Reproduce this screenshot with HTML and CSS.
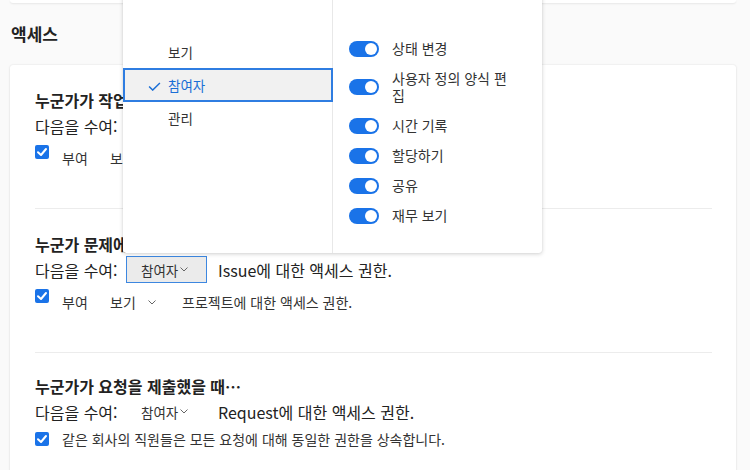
FILE: index.html
```html
<!DOCTYPE html>
<html lang="ko">
<head>
<meta charset="utf-8">
<link rel="stylesheet" href="styles.css">
</head>
<body>
<div class="page">
  <div class="topcard"></div>
  <h2 class="heading">액세스</h2>
  <div class="card">
    <section class="sec sec1">
      <div class="title">누군가가 작업을 만들었을 때…</div>
      <div class="grant">
        <span class="lbl">다음을 수여:</span>
        <span class="dd">참여자<svg class="chev" viewBox="0 0 8 5"><polyline points="0.5,0.5 4,4 7.5,0.5"/></svg></span>
        <span>Task에 대한 액세스 권한.</span>
      </div>
      <div class="check">
        <span class="cb up"><svg viewBox="0 0 14 14"><polyline points="3,7.2 6,10 11,4"/></svg></span>
        <span class="give">부여</span>
        <span class="dd2">보기<svg class="chev" viewBox="0 0 8 5"><polyline points="0.5,0.5 4,4 7.5,0.5"/></svg></span>
        <span>프로젝트에 대한 액세스 권한.</span>
      </div>
    </section>
    <div class="sep"></div>
    <section class="sec sec2">
      <div class="title">누군가 문제에 댓글을 달았을 때…</div>
      <div class="grant">
        <span class="lbl">다음을 수여:</span>
        <span class="dd active">참여자<svg class="chev" viewBox="0 0 8 5"><polyline points="0.5,0.5 4,4 7.5,0.5"/></svg></span>
        <span>Issue에 대한 액세스 권한.</span>
      </div>
      <div class="check">
        <span class="cb up"><svg viewBox="0 0 14 14"><polyline points="3,7.2 6,10 11,4"/></svg></span>
        <span class="give">부여</span>
        <span class="dd2">보기<svg class="chev" viewBox="0 0 8 5"><polyline points="0.5,0.5 4,4 7.5,0.5"/></svg></span>
        <span>프로젝트에 대한 액세스 권한.</span>
      </div>
    </section>
    <div class="sep"></div>
    <section class="sec sec3">
      <div class="title">누군가가 요청을 제출했을 때…</div>
      <div class="grant">
        <span class="lbl">다음을 수여:</span>
        <span class="dd">참여자<svg class="chev" viewBox="0 0 8 5"><polyline points="0.5,0.5 4,4 7.5,0.5"/></svg></span>
        <span>Request에 대한 액세스 권한.</span>
      </div>
      <div class="check last">
        <span class="cb"><svg viewBox="0 0 14 14"><polyline points="3,7.2 6,10 11,4"/></svg></span>
        <span>같은 회사의 직원들은 모든 요청에 대해 동일한 권한을 상속합니다.</span>
      </div>
    </section>
  </div>

  <div class="menu">
    <div class="roles">
      <div class="role">보기</div>
      <div class="role selected"><svg class="tick" viewBox="0 0 14 10"><polyline points="1,5 5,9 13,1"/></svg>참여자</div>
      <div class="role">관리</div>
    </div>
    <div class="perms">
      <div class="perm"><span class="toggle"></span><span class="plabel">상태 변경</span></div>
      <div class="perm"><span class="toggle"></span><span class="plabel">사용자 정의 양식 편집</span></div>
      <div class="perm"><span class="toggle"></span><span class="plabel">시간 기록</span></div>
      <div class="perm"><span class="toggle"></span><span class="plabel">할당하기</span></div>
      <div class="perm"><span class="toggle"></span><span class="plabel">공유</span></div>
      <div class="perm"><span class="toggle"></span><span class="plabel">재무 보기</span></div>
    </div>
  </div>
</div>
</body>
</html>
```

FILE: styles.css
```css
* { box-sizing: border-box; }
html, body {
  margin: 0;
  padding: 0;
  background: #fafafa;
  font-family: "Noto Sans CJK KR", "Noto Sans", sans-serif;
  color: #262626;
}
.page {
  position: relative;
  width: 750px;
  height: 470px;
  overflow: hidden;
  padding: 0 14px 0 10px;
}
.topcard {
  height: 3px;
  background: #fff;
  border-radius: 0 0 3px 3px;
  box-shadow: 0 1px 2px rgba(0,0,0,0.08);
}
.heading {
  margin: 19px 0 19px 1px;
  font-size: 17px;
  line-height: 24px;
  font-weight: 700;
  color: #222;
}
.card {
  background: #fff;
  border-radius: 3px;
  box-shadow: 0 0 2px rgba(0,0,0,0.12), 0 1px 3px rgba(0,0,0,0.05);
  padding: 0 24px 0 25px;
  height: 420px;
}
.sep {
  height: 1px;
  background: #ececec;
}
.sec1 { padding: 24px 0 36px; }
.sec2 { padding: 24px 0 36px; }
.sec3 { padding: 22px 0 0; }
.title {
  font-size: 16px;
  line-height: 22px;
  font-weight: 700;
  color: #222;
}
.grant {
  display: flex;
  align-items: center;
  height: 29px;
  font-size: 16px;
  color: #222;
}
.lbl { width: 91px; }
.dd {
  display: flex;
  align-items: center;
  width: 81px;
  height: 27px;
  margin-right: 11px;
  padding-left: 14px;
  border: 1px solid transparent;
  font-size: 13.5px;
  color: #333;
}
.dd.active {
  background: #ebebeb;
  border-color: #3d87e0;
}
.chev {
  width: 8px;
  height: 5px;
  margin-left: 2px;
  fill: none;
  stroke: #666;
  stroke-width: 1;
}
.check {
  display: flex;
  align-items: center;
  height: 28px;
  margin-top: 4px;
  font-size: 14px;
  color: #333;
}
.check.last { margin-top: 0; height: 26px; }
.cb {
  flex: none;
  width: 14px;
  height: 14px;
  margin-right: 13px;
  border-radius: 2px;
  background: #1a73e8;
  display: flex;
}
.cb.up { margin-bottom: 12px; }
.cb svg {
  width: 14px;
  height: 14px;
  fill: none;
  stroke: #fff;
  stroke-width: 2;
  stroke-linecap: round;
  stroke-linejoin: round;
}
.give { width: 48px; }
.dd2 {
  display: flex;
  align-items: center;
  width: 72px;
}
.dd2 .chev { margin-left: 12px; }

/* popup menu */
.menu {
  position: absolute;
  left: 123px;
  top: -10px;
  width: 419px;
  height: 263px;
  background: #fff;
  border-radius: 3px;
  box-shadow: 0 1px 4px rgba(0,0,0,0.18), 0 0 1px rgba(0,0,0,0.15);
  display: grid;
  grid-template-columns: 210px 1fr;
}
.roles {
  border-right: 1px solid #e8e8e8;
  padding-top: 46px;
}
.role {
  position: relative;
  height: 32px;
  line-height: 32px;
  padding-left: 45px;
  font-size: 13.5px;
  color: #333;
}
.role.selected {
  height: 34px;
  line-height: 30px;
  margin-right: -1px;
  padding-left: 43px;
  border: 2px solid #2f7de1;
  background: #f1f1f1;
  color: #1b6fd6;
}
.tick {
  position: absolute;
  left: 23px;
  top: 12px;
  width: 13px;
  height: 9px;
  fill: none;
  stroke: #1b6fd6;
  stroke-width: 1.6;
}
.perms {
  padding: 44px 0 0 16px;
}
.perm {
  display: flex;
  align-items: center;
  padding: 6px 0 7px;
}
.toggle {
  position: relative;
  flex: none;
  width: 30px;
  height: 16px;
  border-radius: 8px;
  background: #1a73e8;
  margin-right: 13px;
}
.toggle::after {
  content: "";
  position: absolute;
  right: 2px;
  top: 2px;
  width: 12px;
  height: 12px;
  border-radius: 50%;
  background: #fff;
}
.plabel {
  width: 122px;
  font-size: 14px;
  line-height: 17px;
  color: #333;
}
```
